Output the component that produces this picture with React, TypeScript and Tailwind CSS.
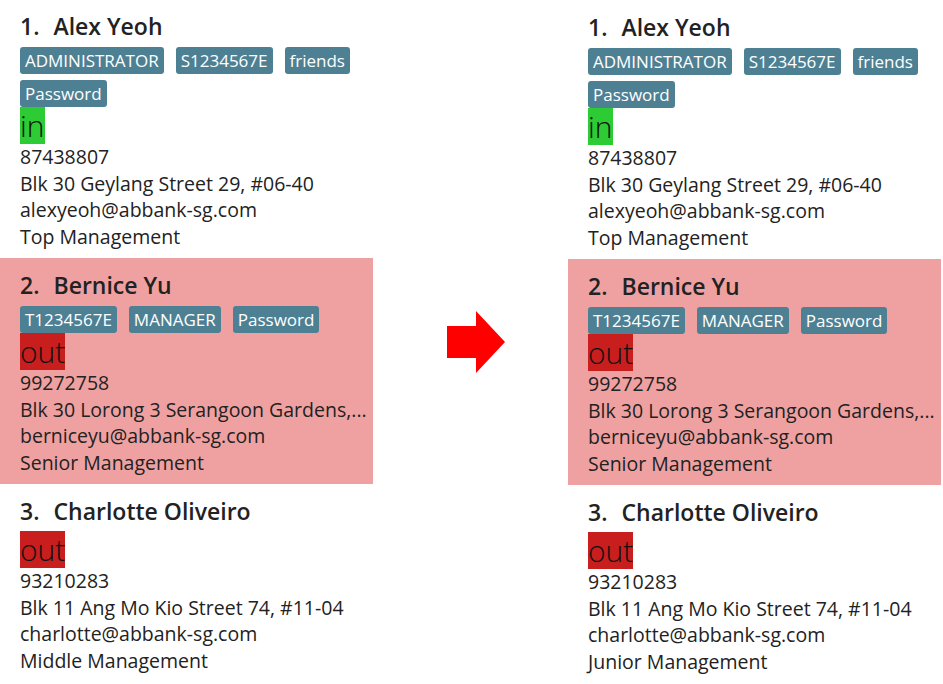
type Person = {
  name: string;
  tags: string[];
  online: boolean;
  phone: string;
  address: string;
  email: string;
  role: string;
  selected?: boolean;
};

const before: Person[] = [
  {
    name: "Alex Yeoh",
    tags: ["ADMINISTRATOR", "S1234567E", "friends", "Password"],
    online: true,
    phone: "87438807",
    address: "Blk 30 Geylang Street 29, #06-40",
    email: "alexyeoh@abbank-sg.com",
    role: "Top Management",
  },
  {
    name: "Bernice Yu",
    tags: ["T1234567E", "MANAGER", "Password"],
    online: false,
    phone: "99272758",
    address: "Blk 30 Lorong 3 Serangoon Gardens,...",
    email: "berniceyu@abbank-sg.com",
    role: "Senior Management",
    selected: true,
  },
  {
    name: "Charlotte Oliveiro",
    tags: [],
    online: false,
    phone: "93210283",
    address: "Blk 11 Ang Mo Kio Street 74, #11-04",
    email: "charlotte@abbank-sg.com",
    role: "Middle Management",
  },
];

const after: Person[] = before.map((p, i) =>
  i === 2 ? { ...p, role: "Junior Management" } : p
);

const PersonCard = ({ person, index }: { person: Person; index: number }) => {
  const hasTags = person.tags.length > 0;
  return (
    <div
      className={`pl-5 pr-2 pt-[13px] pb-[8px] ${
        person.selected ? "bg-[#efa1a1]" : "bg-white"
      }`}
    >
      <div className="flex h-[28px] items-center gap-[14px] text-[23px] font-semibold leading-[28px] text-[#222]">
        <span>{index}.</span>
        <span>{person.name}</span>
      </div>
      {hasTags && (
        <div className="mt-[7px] flex flex-wrap gap-x-3 gap-y-[6px]">
          {person.tags.map((tag) => (
            <span
              key={tag}
              className="h-[27px] rounded-[3px] bg-[#4e8094] px-[5px] text-[17px] leading-[27px] text-white"
            >
              {tag}
            </span>
          ))}
        </div>
      )}
      <div className={hasTags ? "" : "mt-[6px]"}>
        <span
          className={`inline-block h-[37px] text-[30px] font-light leading-[37px] text-[#111] ${
            person.online ? "bg-[#2ecc34]" : "bg-[#c81e1e]"
          }`}
        >
          {person.online ? "in" : "out"}
        </span>
      </div>
      <div className="text-[19.5px] leading-[26.5px] text-[#222]">
        <div>{person.phone}</div>
        <div className="whitespace-nowrap">{person.address}</div>
        <div>{person.email}</div>
        <div>{person.role}</div>
      </div>
    </div>
  );
};

const PersonList = ({ people }: { people: Person[] }) => (
  <div className="flex w-[373px] flex-col">
    {people.map((p, i) => (
      <PersonCard key={p.name} person={p} index={i + 1} />
    ))}
  </div>
);

export default function App() {
  return (
    <div
      className="flex h-[684px] w-[943px] overflow-hidden bg-white"
      style={{ fontFamily: '"Open Sans", "Noto Sans", sans-serif' }}
    >
      <div className="-mt-[1px]">
        <PersonList people={before} />
      </div>
      <div className="flex w-[196px] items-center pl-[74px]">
        <svg width="58" height="62" viewBox="0 0 58 62">
          <polygon points="0,15 29,15 29,0 58,31 29,62 29,47 0,47" fill="#ff0000" />
        </svg>
      </div>
      <div className="-ml-[1px]">
        <PersonList people={after} />
      </div>
    </div>
  );
}
